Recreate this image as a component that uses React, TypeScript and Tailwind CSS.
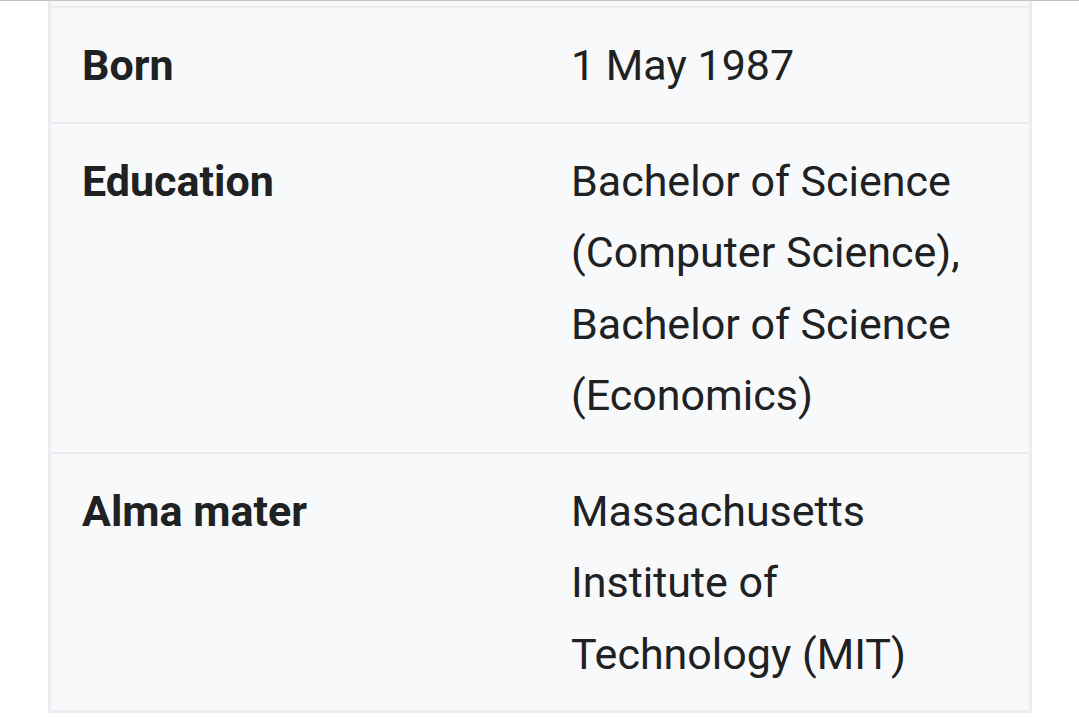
const rows = [
  { label: 'Born', value: '1 May 1987' },
  {
    label: 'Education',
    value: 'Bachelor of Science (Computer Science), Bachelor of Science (Economics)',
  },
  { label: 'Alma mater', value: 'Massachusetts Institute of Technology (MIT)' },
];

export default function App() {
  return (
    <div
      className="min-h-[726px] w-[1079px] bg-white text-[#202122]"
      style={{ fontFamily: 'Roboto, "Noto Sans", sans-serif' }}
    >
      <div className="h-px bg-[#c2c2c2]" />
      <div className="ml-[48px] w-[984px] border-x-[3px] border-b-[3px] border-[#eaecf0] bg-[#f8f9fa]">
        {/* tail of the row above, cut off by the screenshot */}
        <div className="h-[7px] border-b-2 border-[#eaecf0]" />
        {rows.map((row, i) => (
          <div
            key={row.label}
            className={
              'flex text-[43px] leading-[71.5px] ' +
              (i < rows.length - 1 ? 'border-b-2 border-[#eaecf0]' : '')
            }
          >
            <div className="w-1/2 pt-[22px] pb-[20px] pl-[31px] pr-[32px] font-bold">{row.label}</div>
            <div className="w-1/2 pt-[22px] pb-[20px] pl-[31px] pr-[32px]">{row.value}</div>
          </div>
        ))}
      </div>
    </div>
  );
}
